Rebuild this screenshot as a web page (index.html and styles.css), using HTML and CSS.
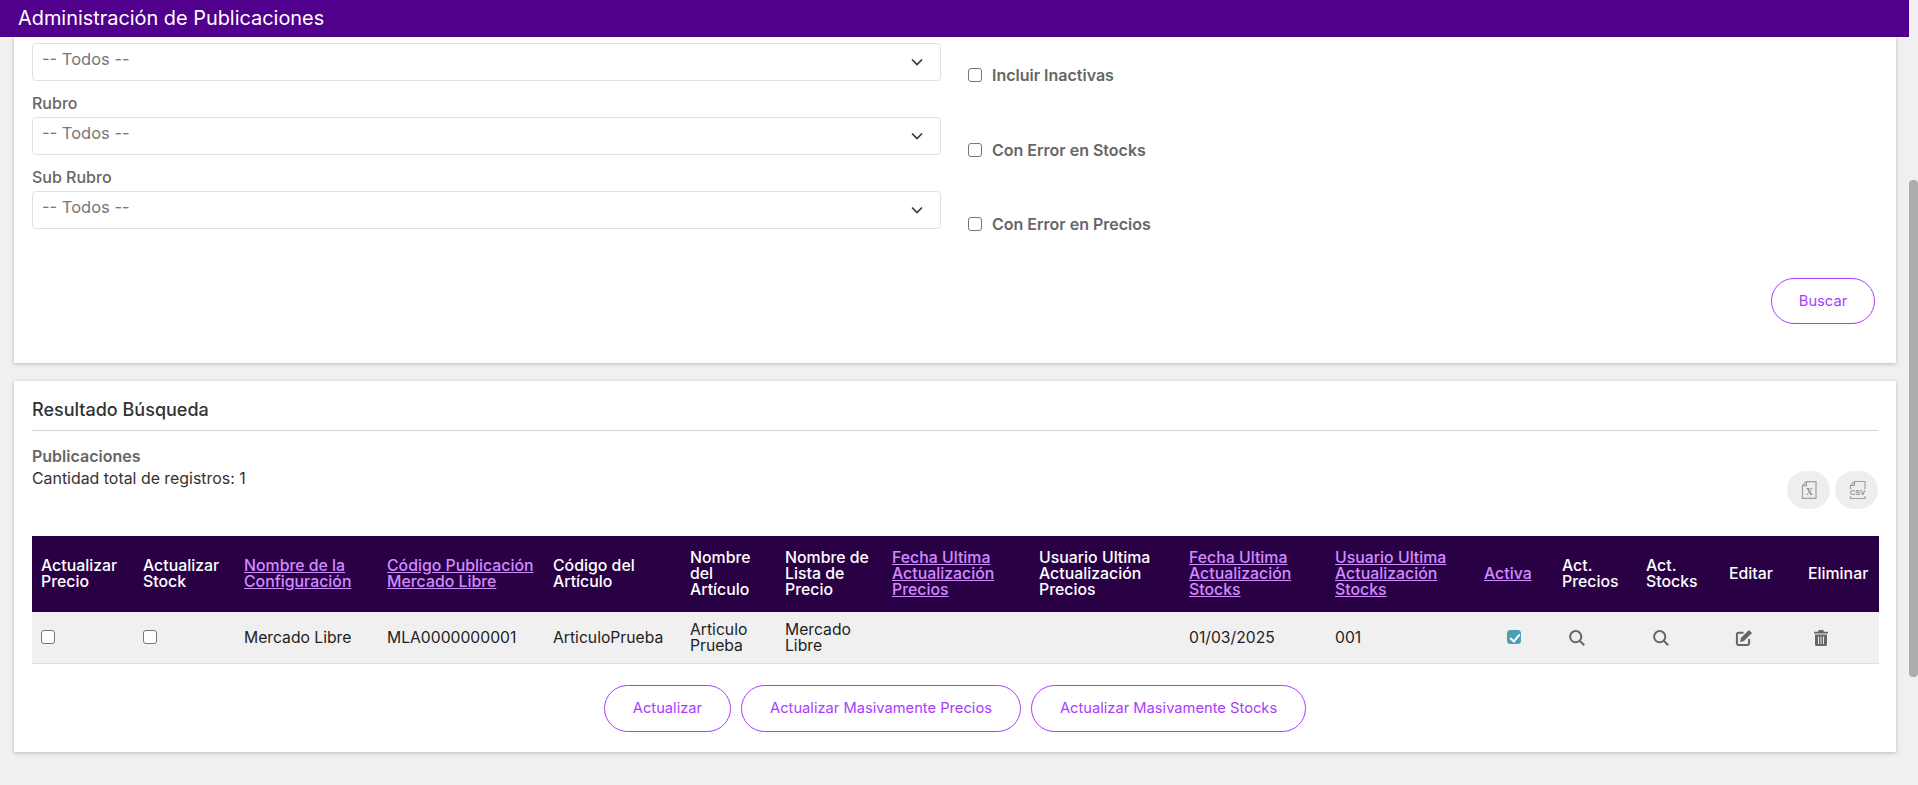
FILE: index.html
```html
<!DOCTYPE html>
<html lang="es">
<head>
<meta charset="utf-8">
<title>Administración de Publicaciones</title>
<link rel="stylesheet" href="styles.css">
</head>
<body>
<div class="app">
  <div class="main">
    <header class="topbar">Administración de Publicaciones</header>
    <section class="card filters">
      <div class="filter-grid">
        <div class="select first"><span>-- Todos --</span><svg class="chev" viewBox="0 0 12 8"><path d="M1 1.5l5 5 5-5"/></svg></div>
        <label class="check top"><input type="checkbox"><span>Incluir Inactivas</span></label>
        <div class="field">
          <div class="field-label">Rubro</div>
          <div class="select"><span>-- Todos --</span><svg class="chev" viewBox="0 0 12 8"><path d="M1 1.5l5 5 5-5"/></svg></div>
        </div>
        <label class="check"><input type="checkbox"><span>Con Error en Stocks</span></label>
        <div class="field">
          <div class="field-label">Sub Rubro</div>
          <div class="select"><span>-- Todos --</span><svg class="chev" viewBox="0 0 12 8"><path d="M1 1.5l5 5 5-5"/></svg></div>
        </div>
        <label class="check"><input type="checkbox"><span>Con Error en Precios</span></label>
      </div>
      <div class="search-row"><button class="btn search">Buscar</button></div>
    </section>
    <section class="card results">
      <h2 class="results-title">Resultado Búsqueda</h2>
      <div class="meta-row">
        <div class="meta">
          <div class="meta-name">Publicaciones</div>
          <div class="meta-count">Cantidad total de registros: 1</div>
        </div>
        <div class="exports">
          <button class="round" aria-label="Excel"><svg viewBox="0 0 18 18" class="exp"><path d="M6.500 .6h9.500v16.800H2.500V4.500z M6.500 .6v4h-4"/><text x="9.300" y="14.300" class="xl">X</text></svg></button>
          <button class="round" aria-label="CSV"><svg viewBox="0 0 18 18" class="exp"><path d="M2.500 8V4.500l4-4h10.500V8 M6.500 .5v4h-4 M2.500 15v2.500h14.500V15"/><text x="9.500" y="13.800" class="csv">CSV</text></svg></button>
        </div>
      </div>
      <table class="grid">
        <colgroup>
          <col class="c1"><col class="c2"><col class="c3"><col class="c4"><col class="c5"><col class="c6"><col class="c7"><col class="c8"><col class="c9"><col class="c10"><col class="c11"><col class="c12"><col class="c13"><col class="c14"><col class="c15"><col class="c16">
        </colgroup>
        <thead>
          <tr>
            <th>Actualizar Precio</th>
            <th>Actualizar Stock</th>
            <th><a href="#">Nombre de la Configuración</a></th>
            <th><a href="#">Código Publicación Mercado Libre</a></th>
            <th>Código del Artículo</th>
            <th>Nombre del Artículo</th>
            <th>Nombre de Lista de Precio</th>
            <th><a href="#">Fecha Ultima Actualización Precios</a></th>
            <th>Usuario Ultima Actualización Precios</th>
            <th><a href="#">Fecha Ultima Actualización Stocks</a></th>
            <th><a href="#">Usuario Ultima Actualización Stocks</a></th>
            <th><a href="#">Activa</a></th>
            <th>Act. Precios</th>
            <th>Act. Stocks</th>
            <th>Editar</th>
            <th>Eliminar</th>
          </tr>
        </thead>
        <tbody>
          <tr>
            <td><input type="checkbox"></td>
            <td><input type="checkbox"></td>
            <td>Mercado Libre</td>
            <td>MLA0000000001</td>
            <td>ArticuloPrueba</td>
            <td>Articulo Prueba</td>
            <td>Mercado Libre</td>
            <td></td>
            <td></td>
            <td>01/03/2025</td>
            <td>001</td>
            <td><input type="checkbox" class="on" checked></td>
            <td><svg class="ico" viewBox="0 0 16 16"><circle cx="6.700" cy="6.700" r="5.600"/><path d="M10.800 10.800l4.400 4.400"/></svg></td>
            <td><svg class="ico" viewBox="0 0 16 16"><circle cx="6.700" cy="6.700" r="5.600"/><path d="M10.800 10.800l4.400 4.400"/></svg></td>
            <td><svg class="ico" viewBox="0 0 16 16"><path d="M7.500 2.800H2.800A1.900 1.900 0 0 0 .9 4.700v8.400A1.900 1.900 0 0 0 2.800 15h8.400a1.900 1.900 0 0 0 1.900-1.900V9"/><path class="fill" d="M12.900 0l3.100 3.100-8 8-3.900.8.800-3.900z"/></svg></td>
            <td><svg class="ico trash" viewBox="0 0 14 16"><path class="fill" d="M4.800 0h4.400l.8 1.700H14v1.800H0V1.700h4z"/><path class="fill" d="M1 4.500h12v10a1.500 1.500 0 0 1-1.500 1.500h-9A1.500 1.500 0 0 1 1 14.500z"/><path class="slot" d="M4.500 6.500v7.500M7 6.500v7.500M9.500 6.500v7.500"/></svg></td>
          </tr>
        </tbody>
      </table>
      <div class="actions">
        <button class="btn">Actualizar</button>
        <button class="btn">Actualizar Masivamente Precios</button>
        <button class="btn">Actualizar Masivamente Stocks</button>
      </div>
    </section>
  </div>
  <div class="scrollbar"><div class="thumb"></div></div>
</div>
</body>
</html>
```
FILE: styles.css
```css
* { box-sizing: border-box; }
html, body { margin: 0; height: 100%; overflow: hidden; }
body { background: #f0f0f0; font-family: "Inter", "Liberation Sans", sans-serif; color: #212529; }
.app { display: flex; height: 785px; }
.main { flex: 1; min-width: 0; }
.topbar { height: 37px; background: #50008c; color: #fff; font-size: 19.900px; line-height: 37px; padding-left: 18px; }
.card { background: #fff; margin: 0 13px 0 14px; box-shadow: 0 1px 4px rgba(0,0,0,.22); }
.filters { height: 326px; padding: 6px 18px 0; }
.filter-grid { display: grid; grid-template-columns: 909px 1fr; column-gap: 27px; }
.select { height: 38px; border: 1px solid #dfe1e6; border-radius: 4px; display: flex; align-items: center; justify-content: space-between; padding: 0 17px 6px 9px; color: #777; font-size: 16.500px; }
.chev { width: 12px; height: 8px; margin-top: 6px; fill: none; stroke: #343a40; stroke-width: 1.700; }
.field { padding-top: 9px; }
.field-label { font-size: 16px; font-weight: 500; color: #666; line-height: 26px; margin-bottom: 1px; }
.check { display: flex; align-items: center; gap: 10px; font-size: 16px; font-weight: 600; color: #666; line-height: 20px; align-self: end; margin-bottom: -5px; }
.check.top { margin-bottom: -4px; }
input[type=checkbox] { appearance: none; margin: 0; width: 14px; height: 14px; border: 1px solid #767676; border-radius: 3px; background: #fff; position: relative; display: block; }
input.on { background: #4a9fb5; border-color: #4a9fb5; margin-left: 23px; }
input.on::after { content: ""; position: absolute; left: 4px; top: 1px; width: 4px; height: 8px; border: solid #fff; border-width: 0 2px 2px 0; transform: rotate(40deg); }
.search-row { display: flex; justify-content: flex-end; padding: 49px 3px 0 0; }
.btn { height: 47px; padding: 0 28px; border: 1px solid #a93bff; border-radius: 24px; background: #fff; color: #a93bff; font: 400 14.700px "Inter", sans-serif; }
.btn.search { width: 104px; height: 46px; padding: 0; }
.results { height: 371px; margin-top: 18px; padding: 0 18px; }
.results-title { margin: 0; height: 50px; line-height: 57px; font-size: 18px; font-weight: 500; color: #333; border-bottom: 1px solid #d5d5d5; }
.meta-row { display: flex; justify-content: space-between; height: 105px; }
.meta-name { font-size: 16px; font-weight: 600; color: #666; margin: 14px 0 1px; line-height: 22px; }
.meta-count { font-size: 15.900px; color: #333; line-height: 22px; }
.exports { display: flex; gap: 5px; padding-top: 40px; }
.round { width: 43px; height: 38px; padding: 0; border: 0; border-radius: 19px; background: #eee; display: flex; align-items: center; justify-content: center; }
.exp { width: 18px; height: 18px; fill: none; stroke: #a0a0a0; stroke-width: 1.200; overflow: visible; }
.exp text { fill: #929292; stroke: none; text-anchor: middle; font-family: "Liberation Serif", serif; font-weight: 700; }
.xl { font-size: 10px; }
.exp .csv { font: 700 7.500px "Liberation Sans", sans-serif; }
.grid { width: 1846px; table-layout: fixed; border-collapse: collapse; font-size: 15.700px; }
.c1 { width: 102px; } .c2 { width: 101px; } .c3 { width: 143px; } .c4 { width: 166px; }
.c5 { width: 137px; } .c6 { width: 95px; } .c7 { width: 107px; } .c8 { width: 147px; }
.c9 { width: 150px; } .c10 { width: 146px; } .c11 { width: 149px; } .c12 { width: 78px; }
.c13 { width: 84px; } .c14 { width: 83px; } .c15 { width: 79px; } .c16 { width: 80px; }
.grid th { background: #2a0045; color: #fff; height: 76px; padding: 0 2px 1px 9px; text-align: left; font-size: 15.850px; font-weight: 500; line-height: 16px; vertical-align: middle; }
.grid th a { color: #d08cff; }
.grid td { background: #f0f0f0; height: 51px; padding: 2px 9px 0; line-height: 16px; color: #222; border-bottom: 1px solid #dedede; vertical-align: middle; }
.grid td input { margin-top: -2px; }
.ico { width: 16px; height: 16px; display: block; fill: none; stroke: #666; stroke-width: 2; margin-left: 7px; overflow: visible; }
.ico .fill { fill: #666; stroke: none; }
.trash { width: 14px; margin-left: 6px; }
.trash .slot { stroke: #e8e8e8; stroke-width: 1; }
.actions { display: flex; justify-content: center; gap: 10px; padding-top: 21px; }
.scrollbar { width: 9px; background: #f0f0f0; padding-top: 180px; }
.thumb { height: 497px; background: #adadad; border-radius: 4px; }
```
